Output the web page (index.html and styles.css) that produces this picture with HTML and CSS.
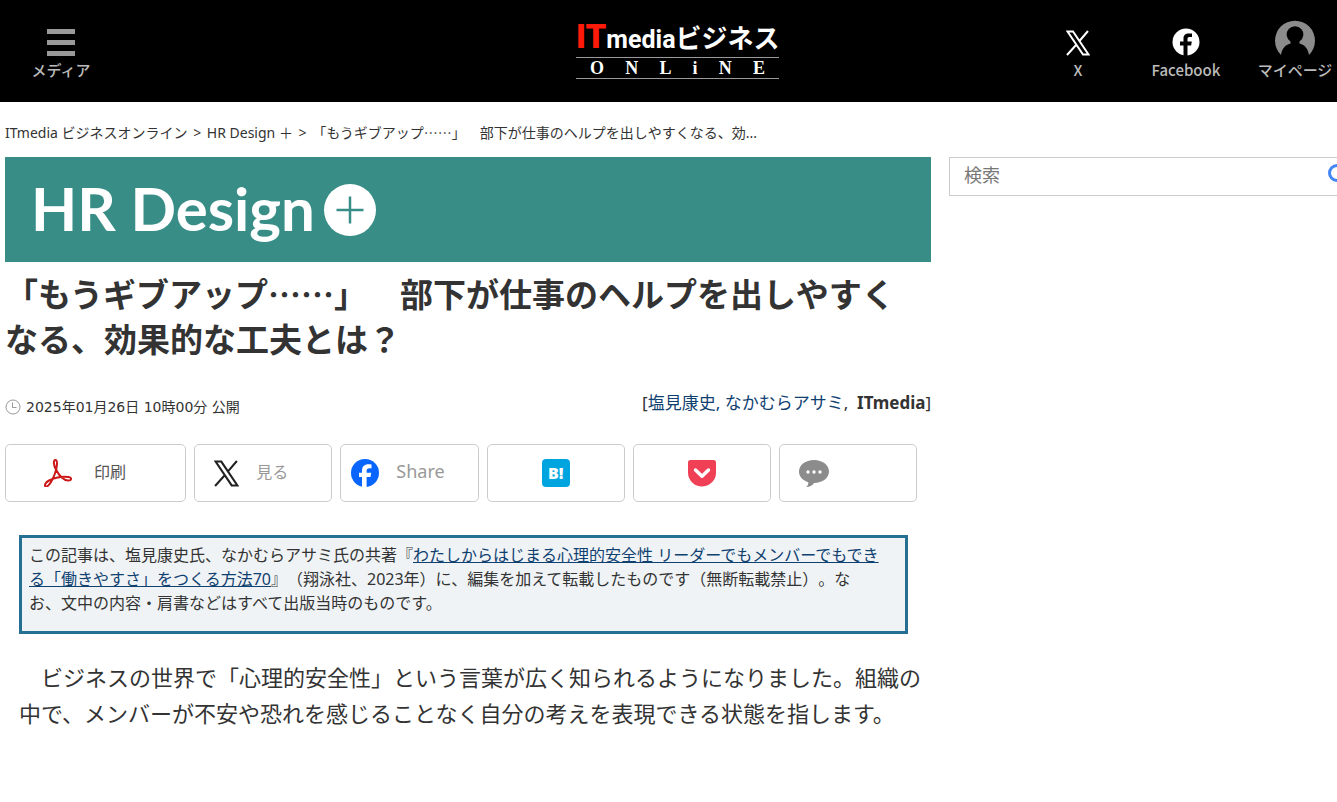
FILE: index.html
```html
<!DOCTYPE html>
<html lang="ja">

<head>
    <meta charset="UTF-8">
    <meta name="viewport" content="width=device-width, initial-scale=1">
    <title>「もうギブアップ……」　部下が仕事のヘルプを出しやすくなる、効果的な工夫とは？</title>
    <link rel="stylesheet" href="styles.css">
</head>

<body>
    <header class="site-header">
        <button type="button" class="header-item menu-button">
            <svg width="28" height="27" viewBox="0 0 28 27"><path fill="#999" d="M0 0h28v5H0zM0 11h28v5H0zM0 22h28v5H0z"/></svg>
            <span>メディア</span>
        </button>
        <a href="#" class="logo">
            <span class="logo-top"><span class="logo-it">IT</span><span class="logo-media">media</span><span class="logo-business">ビジネス</span></span>
            <span class="logo-bottom"><span>O</span><span>N</span><span>L</span><span>i</span><span>N</span><span>E</span></span>
        </a>
        <nav class="header-nav">
            <a href="#" class="header-item item-x">
                <svg width="24" height="26" viewBox="0 0 24 26"><path fill="none" stroke="#fff" stroke-width="2" d="M1.500 1.500h5.500l15.500 23h-5.500zM22 1L13 11.500M10.500 14.500L1 25"/></svg>
                <span>X</span>
            </a>
            <a href="#" class="header-item item-facebook">
                <svg width="28" height="28" viewBox="0 0 28 28"><circle cx="14" cy="14" r="13.500" fill="#fff"/><path fill="#000" d="M11.500 28V17.500H8v-4h3.500v-3C11.500 7 13.500 5.500 16.500 5.500h3.500v3.500h-2.500c-1.500 0-2 .8-2 2v2.500h4.300l-.7 4h-3.600V28z"/></svg>
                <span>Facebook</span>
            </a>
            <a href="#" class="header-item item-mypage">
                <svg width="40" height="37" viewBox="0 0 40 37"><path fill="#8c8c8c" d="M6 36A20 20 0 1 1 34 36C33 29.500 30 26 24.500 24.500V22.500A8.300 8.300 0 1 0 15.500 22.500V24.500C10 26 7 29.500 6 36z"/></svg>
                <span>マイページ</span>
            </a>
        </nav>
    </header>

    <nav class="breadcrumb">
        <a href="#">ITmedia ビジネスオンライン</a> <span class="sep">&gt;</span> <a href="#">HR Design ＋</a> <span class="sep">&gt;</span> 「もうギブアップ<span class="dots">……</span>」　部下が仕事のヘルプを出しやすくなる、効...
    </nav>

    <div class="container">
        <main class="article">
            <a href="#" class="banner">
                <span>HR Design</span>
                <svg width="52" height="52" viewBox="0 0 52 52"><circle cx="26" cy="26" r="26" fill="#fff"/><path stroke="#388e87" stroke-width="2.500" d="M12.500 26h27M26 12.500v27"/></svg>
            </a>
            <h1>「もうギブアップ<span class="dots">……</span>」　部下が仕事のヘルプを出しやすく<br>なる、効果的な工夫とは？</h1>

            <div class="meta">
                <p class="date">
                    <svg width="16" height="16" viewBox="0 0 16 16" fill="none" stroke="#999"><circle cx="8" cy="8" r="7"/><path d="M7.500 3.500v5h4"/></svg>
                    <time datetime="2025-01-26T10:00">2025年01月26日 10時00分 公開</time>
                </p>
                <p class="authors">[<a href="#">塩見康史, なかむらアサミ</a>,&nbsp; <b>ITmedia</b>]</p>
            </div>

            <div class="share">
                <button type="button" class="share-button share-print">
                    <svg width="28" height="28" viewBox="0 0 28 28" fill="none" stroke="#cc1719" stroke-width="2"><path d="M11.500 1C9 1 9.500 6 12 10.500c3 6 7 10.500 12 11 4 .2 4-3 .5-3.500C18 17.200 10 19 5 21.500c-4 2-5 5.500-3.200 6 2.700.5 6.700-6.500 9-12.500C13 9 14 1.200 11.500 1z"/></svg>
                    <span class="share-label">印刷</span>
                </button>
                <a href="#" class="share-button">
                    <svg width="25" height="27" viewBox="0 0 24 26"><path fill="none" stroke="#222" stroke-width="2" d="M1.500 1.500h5.500l15.500 23h-5.500zM22 1L13 11.500M10.500 14.500L1 25"/></svg>
                    <span class="share-label">見る</span>
                </a>
                <a href="#" class="share-button share-facebook">
                    <svg width="28" height="28" viewBox="0 0 28 28"><circle cx="14" cy="14" r="14" fill="#0866ff"/><path fill="#fff" d="M11 28V18H8v-4.300h3V12c0-4.700 2.200-6.800 6.600-6.800.9 0 2 .1 2.900.4v3.800c-.5-.1-1.200-.1-1.900-.1-2.300 0-3 .9-3 3v1.400h4.600L19.500 18h-3.900v10z"/></svg>
                    <span class="share-label">Share</span>
                </a>
                <a href="#" class="share-button share-center" aria-label="はてなブックマーク">
                    <span class="hatena">B!</span>
                </a>
                <a href="#" class="share-button share-center" aria-label="Pocket">
                    <svg width="28" height="27" viewBox="0 0 28 27"><path fill="#ef4056" d="M2.500 0h23A2.500 2.500 0 0 1 28 2.500V12a14 14 0 0 1-28 1V2.500A2.500 2.500 0 0 1 2.500 0z"/><path fill="none" stroke="#fff" stroke-width="3.500" stroke-linecap="round" stroke-linejoin="round" d="M7.500 10l6.500 6.200L20.500 10"/></svg>
                </a>
                <a href="#" class="share-button" aria-label="コメント">
                    <svg width="30" height="27" viewBox="0 0 30 27"><path fill="#8c8c8c" d="M15 0C23.500 0 30 5 30 11.500S23.500 23 15 23c-1 2-4 4-8 4 2-1.500 2.500-3 2.300-4.800C4 20.500 0 17 0 11.500 0 5 6.500 0 15 0z"/><g fill="#fff"><circle cx="9" cy="12" r="1.700"/><circle cx="15" cy="12" r="1.700"/><circle cx="21" cy="12" r="1.700"/></g></svg>
                </a>
            </div>

            <div class="notice">
                この記事は、塩見康史氏、なかむらアサミ氏の共著『<a href="#">わたしからはじまる心理的安全性 リーダーでもメンバーでもでき<br>る「働きやすさ」をつくる方法70</a>』（翔泳社、2023年）に、編集を加えて転載したものです（無断転載禁止）。な<br>お、文中の内容・肩書などはすべて出版当時のものです。
            </div>

            <p class="text">　ビジネスの世界で「心理的安全性」という言葉が広く知られるようになりました。組織の<br>中で、メンバーが不安や恐れを感じることなく自分の考えを表現できる状態を指します。</p>
        </main>

        <aside class="sidebar">
            <form class="search">
                <input type="text" placeholder="検索" aria-label="検索">
                <button type="submit" aria-label="検索する">
                    <svg width="20" height="20" viewBox="0 0 20 20" fill="none" stroke="#4285f4" stroke-width="3"><circle cx="9" cy="9" r="7.500"/><path d="M14 14l5 5"/></svg>
                </button>
            </form>
        </aside>
    </div>
</body>

</html>
```
FILE: styles.css
```css
body {
    margin: 0;
    overflow-x: hidden;
    background: #fff;
    color: #333;
    font-family: "Noto Sans", "Noto Sans CJK JP", sans-serif;
    text-spacing-trim: space-all;
}

a {
    color: inherit;
    text-decoration: none;
}

button {
    font-family: inherit;
    cursor: pointer;
}

svg {
    display: block;
    flex: none;
}

.dots {
    font-family: "Noto Sans CJK JP", sans-serif;
}

/* header */
.site-header {
    display: grid;
    grid-template-columns: 1fr auto 1fr;
    height: 102px;
    padding: 0 5px 0 23px;
    background: #000;
}

.header-item {
    display: flex;
    flex-direction: column;
    align-items: center;
    justify-content: flex-end;
    gap: 4px;
    height: 80px;
    color: #bbb;
    font-family: "Noto Sans CJK JP", sans-serif;
    font-size: 15px;
    font-weight: 500;
    line-height: 20px;
    white-space: nowrap;
}

.menu-button {
    width: 76px;
    padding: 0;
    border: none;
    background: none;
}

.header-nav {
    display: flex;
    justify-content: flex-end;
    gap: 38px;
}

.item-x {
    width: 72px;
}

.item-facebook {
    width: 68px;
}

.item-mypage {
    width: 74px;
}

.logo {
    align-self: start;
    width: 203px;
    padding-top: 17px;
    color: #fff;
}

.logo-top {
    display: flex;
    align-items: baseline;
    height: 40px;
    line-height: 40px;
    white-space: nowrap;
}

.logo-it {
    color: #ff1a0a;
    font-family: "Roboto", sans-serif;
    font-size: 33px;
    font-weight: 900;
}

.logo-media {
    font-family: "Roboto", sans-serif;
    font-size: 25px;
    font-weight: bold;
}

.logo-business {
    font-family: "Noto Sans CJK JP", sans-serif;
    font-size: 26px;
    font-weight: bold;
}

.logo-bottom {
    display: flex;
    justify-content: space-between;
    padding: 0 14px;
    border-top: 1px solid #999;
    border-bottom: 1px solid #999;
    font-family: "Liberation Serif", serif;
    font-size: 18px;
    font-weight: bold;
    line-height: 20px;
}

.breadcrumb {
    padding: 20px 5px 15px;
    font-size: 14px;
    line-height: 20px;
}

.sep {
    margin: 0 2px;
}

.container {
    display: grid;
    grid-template-columns: minmax(0, 1fr) 388px;
    gap: 18px;
    margin-top: -1px;
    padding-left: 5px;
}

/* article */
.banner {
    display: flex;
    align-items: center;
    gap: 9px;
    height: 105px;
    padding-left: 26px;
    background: #388e87;
    color: #fff;
    font-family: "Lato", sans-serif;
    font-size: 60px;
    font-weight: bold;
    line-height: 56px;
}

.banner span {
    padding-bottom: 4px;
}

h1 {
    margin: 9px 0 0;
    font-size: 33px;
    line-height: 45px;
}

.meta {
    display: flex;
    justify-content: space-between;
    margin-top: 29px;
}

.meta p {
    margin: 0;
}

.date {
    display: flex;
    align-items: center;
    gap: 5px;
    padding-top: 6px;
    font-family: "DejaVu Sans", "Noto Sans CJK JP", sans-serif;
    font-size: 14px;
    line-height: 20px;
}

.authors {
    font-size: 17px;
    line-height: 24px;
}

.authors a,
.notice a {
    color: #0f4170;
}

.share {
    display: grid;
    grid-template-columns: 181fr repeat(5, 138fr);
    gap: 8px;
    margin: 27px 14px 0 0;
}

.share-button {
    display: flex;
    align-items: center;
    gap: 17px;
    box-sizing: border-box;
    height: 58px;
    padding: 0 0 0 19px;
    border: 1px solid #ccc;
    border-radius: 5px;
    background: #fff;
    color: #999;
    font-size: 16px;
}

.share-label {
    padding-bottom: 4px;
}

.share-print {
    gap: 22px;
    padding-left: 38px;
    color: #555;
}

.share-facebook {
    padding-left: 10px;
    font-size: 18px;
}

.share-center {
    justify-content: center;
    padding: 0;
}

.hatena {
    width: 28px;
    border-radius: 4px;
    background: #00a4de;
    color: #fff;
    font-size: 16px;
    font-weight: 900;
    line-height: 28px;
    text-align: center;
}

.notice {
    margin: 33px 23px 0 14px;
    padding: 5px 0 16px 7px;
    border: 3px solid #256f93;
    background: #f0f3f6;
    font-size: 16px;
    line-height: 24px;
    white-space: nowrap;
}

.notice a {
    text-decoration: underline;
}

.text {
    margin: 25px 0 0 14px;
    font-size: 22px;
    line-height: 36px;
    white-space: nowrap;
}

/* the search box runs past the right edge */
.search {
    display: flex;
    align-items: center;
    box-sizing: border-box;
    height: 39px;
    margin-right: -20px;
    border: 1px solid #ccc;
}

.search input {
    flex: 1;
    min-width: 0;
    padding: 0 0 3px 14px;
    border: none;
    outline: none;
    font-family: inherit;
    font-size: 18px;
}

.search input::placeholder {
    color: #777;
}

.search button {
    width: 28px;
    padding: 0 0 6px;
    border: none;
    background: none;
}
```
